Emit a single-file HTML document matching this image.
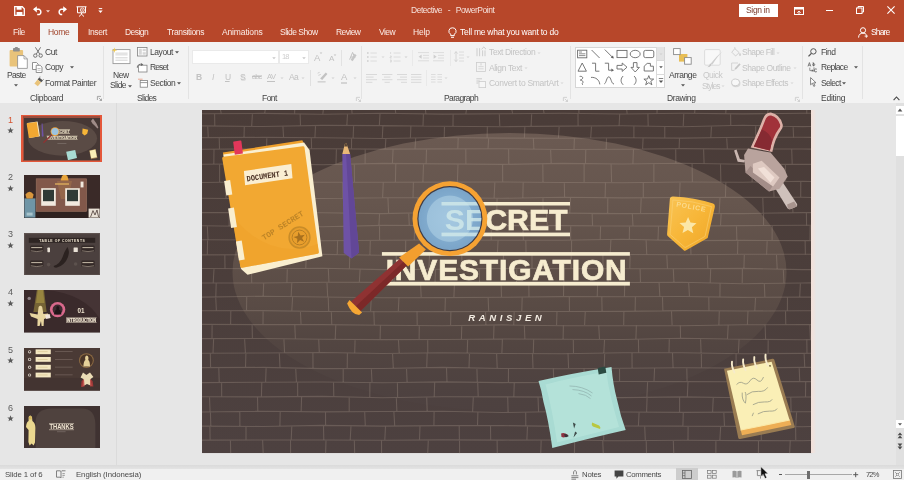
<!DOCTYPE html>
<html><head><meta charset="utf-8"><title>Detective - PowerPoint</title>
<style>
html,body{margin:0;padding:0;}
body{width:904px;height:480px;overflow:hidden;position:relative;background:#E6E6E6;font-family:"Liberation Sans",sans-serif;}
.r{position:absolute;display:block;}
.t{position:absolute;display:block;white-space:nowrap;line-height:10px;height:10px;will-change:transform;filter:blur(0.35px);}
svg.r{filter:blur(0.4px);}
svg{overflow:visible;}
svg text{font-family:"Liberation Sans",sans-serif;}
</style></head><body>
<div class="r" style="left:0px;top:0px;width:904px;height:41.5px;background:#B7472A;"></div>
<div class="r" style="left:0px;top:41.5px;width:904px;height:61.2px;background:#F3F3F3;"></div>
<div class="r" style="left:40.4px;top:22.6px;width:38px;height:19.5px;background:#F3F3F3;"></div>
<svg class="r" style="left:13.5px;top:6px;" width="11" height="10" viewBox="0 0 11 10"><path d="M0.7,0.7 H8.3 L10.3,2.7 V9.3 H0.7 Z" fill="none" stroke="#fff" stroke-width="1.3"/><rect x="2.6" y="0.7" width="5" height="3" fill="#fff"/><rect x="2.6" y="6" width="5.8" height="3.3" fill="#fff"/></svg>
<svg class="r" style="left:33px;top:6px;" width="11" height="9" viewBox="0 0 11 9"><path d="M1.2,3.3 H6.2 A3.2,3 0 0 1 6.2,8.6 H4.2" fill="none" stroke="#fff" stroke-width="1.5"/><path d="M0,3.3 L3.8,0.2 V6.4 Z" fill="#fff"/></svg>
<svg class="r" style="left:44.6px;top:7.6px" width="6" height="6" viewBox="-3 -3 6 6"><path d="M-1.9800000000000002,-0.7200000000000001 L1.9800000000000002,-0.7200000000000001 L0,1.4400000000000002 Z" fill="#F3D9D0"/></svg>
<svg class="r" style="left:56px;top:6px;" width="11" height="9" viewBox="0 0 11 9"><path d="M9.8,3.3 H4.8 A3.2,3 0 0 0 4.8,8.6 H6.2" fill="none" stroke="#fff" stroke-width="1.5"/><path d="M11,3.3 L7.2,0.2 V6.4 Z" fill="#fff"/></svg>
<svg class="r" style="left:75.5px;top:5.5px;" width="11" height="11" viewBox="0 0 11 11"><path d="M0.5,0.8 H10.5 M1.5,0.8 V6.8 H9.5 V0.8 M5.5,6.8 V8.4 M3,10.5 L5.5,8.2 L8,10.5" fill="none" stroke="#fff" stroke-width="1"/><circle cx="6.3" cy="4" r="2" fill="none" stroke="#fff" stroke-width="0.8"/><path d="M5.7,3 L7.4,4 L5.7,5 Z" fill="#fff"/></svg>
<svg class="r" style="left:97.5px;top:7.5px;" width="5" height="6" viewBox="0 0 5 6"><path d="M0.8,0.6 H4.2" stroke="#fff" stroke-width="1"/><path d="M0.3,2.6 H4.7 L2.5,5 Z" fill="#fff"/></svg>
<span class="t" style="left:411.0px;top:5.3px;font-size:8.5px;letter-spacing:-0.49px;color:#F6E2DC;word-spacing:3.8px;">Detective - PowerPoint</span>
<div class="r" style="left:738.5px;top:4px;width:39px;height:12.6px;background:#fff;"></div>
<span class="t" style="left:746.2px;top:5.2px;font-size:8.5px;letter-spacing:-0.34px;color:#7A3A2A;">Sign in</span>
<svg class="r" style="left:793.5px;top:6.5px;" width="10" height="8" viewBox="0 0 10 8"><rect x="0.5" y="0.5" width="9" height="7" fill="none" stroke="#fff" stroke-width="1"/><rect x="0.5" y="0.5" width="9" height="2" fill="#fff"/><path d="M3.3,5.8 L5,4 L6.7,5.8 M5,4.2 V7" fill="none" stroke="#fff" stroke-width="0.9"/></svg>
<div class="r" style="left:825.6px;top:9.6px;width:7.6px;height:1px;background:#fff;"></div>
<svg class="r" style="left:855.5px;top:6px;" width="8" height="8" viewBox="0 0 8 8"><rect x="0.5" y="2" width="5.5" height="5.5" fill="none" stroke="#fff" stroke-width="1"/><path d="M2,2 V0.5 H7.5 V6 H6" fill="none" stroke="#fff" stroke-width="1"/></svg>
<svg class="r" style="left:887px;top:6.3px;" width="8" height="8" viewBox="0 0 8 8"><path d="M0.4,0.4 L7.6,7.6 M7.6,0.4 L0.4,7.6" stroke="#fff" stroke-width="1.1"/></svg>
<span class="t" style="left:13.0px;top:27.3px;font-size:8.5px;letter-spacing:-0.47px;color:#FBEDE8;">File</span>
<span class="t" style="left:48.2px;top:27.3px;font-size:8.5px;letter-spacing:-0.32px;color:#A0432A;">Home</span>
<span class="t" style="left:88.0px;top:27.3px;font-size:8.5px;letter-spacing:-0.38px;color:#FBEDE8;">Insert</span>
<span class="t" style="left:125.2px;top:27.3px;font-size:8.5px;letter-spacing:-0.56px;color:#FBEDE8;">Design</span>
<span class="t" style="left:166.9px;top:27.3px;font-size:8.5px;letter-spacing:-0.38px;color:#FBEDE8;">Transitions</span>
<span class="t" style="left:221.8px;top:27.3px;font-size:8.5px;letter-spacing:-0.14px;color:#FBEDE8;">Animations</span>
<span class="t" style="left:280.3px;top:27.3px;font-size:8.5px;letter-spacing:-0.50px;color:#FBEDE8;">Slide Show</span>
<span class="t" style="left:336.0px;top:27.3px;font-size:8.5px;letter-spacing:-0.59px;color:#FBEDE8;">Review</span>
<span class="t" style="left:378.6px;top:27.3px;font-size:8.5px;letter-spacing:-0.52px;color:#FBEDE8;">View</span>
<span class="t" style="left:413.0px;top:27.3px;font-size:8.5px;letter-spacing:-0.15px;color:#FBEDE8;">Help</span>
<svg class="r" style="left:447.5px;top:26.5px;" width="9" height="12" viewBox="0 0 9 12"><path d="M4.5,0.8 A3.4,3.4 0 0 1 6.3,7.2 V8.6 H2.7 V7.2 A3.4,3.4 0 0 1 4.5,0.8 Z" fill="none" stroke="#fff" stroke-width="1"/><path d="M3,10.3 H6" stroke="#fff" stroke-width="1"/></svg>
<span class="t" style="left:460.4px;top:27.3px;font-size:8.5px;letter-spacing:-0.24px;color:#fff;">Tell me what you want to do</span>
<svg class="r" style="left:857.5px;top:27px;" width="11" height="11" viewBox="0 0 11 11"><circle cx="5" cy="3.3" r="2.6" fill="none" stroke="#fff" stroke-width="1"/><path d="M0.6,10.6 C0.6,7.4 2.4,6.2 5,6.2 C6.4,6.2 7.4,6.6 8,7.2" fill="none" stroke="#fff" stroke-width="1"/><path d="M8.3,7.4 V10.8 M6.6,9.1 H10" stroke="#fff" stroke-width="0.9"/></svg>
<span class="t" style="left:871.2px;top:27.3px;font-size:8.5px;letter-spacing:-0.84px;color:#fff;">Share</span>
<div class="r" style="left:103.3px;top:46px;width:1px;height:53px;background:#E3E3E3;"></div>
<div class="r" style="left:187.7px;top:46px;width:1px;height:53px;background:#E3E3E3;"></div>
<div class="r" style="left:361.3px;top:46px;width:1px;height:53px;background:#E3E3E3;"></div>
<div class="r" style="left:570.4px;top:46px;width:1px;height:53px;background:#E3E3E3;"></div>
<div class="r" style="left:801.8px;top:46px;width:1px;height:53px;background:#E3E3E3;"></div>
<div class="r" style="left:862.4px;top:46px;width:1px;height:53px;background:#E3E3E3;"></div>
<svg class="r" style="left:8.5px;top:46.5px;" width="19" height="22" viewBox="0 0 19 22"><rect x="0.6" y="3" width="13.5" height="16.5" rx="1" fill="#E9C37A"/><rect x="4" y="1" width="6.8" height="3.6" rx="0.8" fill="#8E8E8E"/><rect x="5.8" y="0" width="3.2" height="2" rx="1" fill="#8E8E8E"/><path d="M8.6,8.6 H15 L18.3,11.9 V21.4 H8.6 Z" fill="#fff" stroke="#8A8A8A" stroke-width="0.8"/><path d="M15,8.6 V11.9 H18.3" fill="none" stroke="#8A8A8A" stroke-width="0.7"/></svg>
<span class="t" style="left:6.9px;top:70.2px;font-size:8.5px;letter-spacing:-0.65px;color:#444;">Paste</span>
<svg class="r" style="left:12.9px;top:82.2px" width="6" height="6" viewBox="-3 -3 6 6"><path d="M-1.9800000000000002,-0.7200000000000001 L1.9800000000000002,-0.7200000000000001 L0,1.4400000000000002 Z" fill="#555"/></svg>
<svg class="r" style="left:32.5px;top:46.5px;" width="10" height="11" viewBox="0 0 10 11"><path d="M2.4,0.3 L6.8,7.2 M7.6,0.3 L3.2,7.2" stroke="#666" stroke-width="0.9" fill="none"/><circle cx="2.3" cy="8.6" r="1.7" fill="none" stroke="#666" stroke-width="0.9"/><circle cx="7.7" cy="8.6" r="1.7" fill="none" stroke="#666" stroke-width="0.9"/></svg>
<span class="t" style="left:45.1px;top:47.3px;font-size:8.5px;letter-spacing:-0.44px;color:#444;">Cut</span>
<svg class="r" style="left:32px;top:61.5px;" width="11" height="11" viewBox="0 0 11 11"><path d="M0.5,0.5 H4.5 L6.2,2.2 V7.5 H0.5 Z" fill="#fff" stroke="#777" stroke-width="0.8"/><path d="M4.2,3.3 H8.2 L10,5.1 V10.5 H4.2 Z" fill="#fff" stroke="#777" stroke-width="0.8"/><path d="M5.5,6.5 H8.6 M5.5,8.3 H8.6" stroke="#999" stroke-width="0.6"/></svg>
<span class="t" style="left:45.1px;top:62.4px;font-size:8.5px;letter-spacing:-0.44px;color:#444;">Copy</span>
<svg class="r" style="left:68.6px;top:64.2px" width="6" height="6" viewBox="-3 -3 6 6"><path d="M-1.9800000000000002,-0.7200000000000001 L1.9800000000000002,-0.7200000000000001 L0,1.4400000000000002 Z" fill="#555"/></svg>
<svg class="r" style="left:33.5px;top:77px;" width="10" height="10" viewBox="0 0 10 10"><path d="M5.2,0.6 L9,3.6 L7.3,5.3 L3.6,2.4 Z" fill="#555"/><path d="M3.6,2.6 L7,5.4 L3.8,9.2 L0.4,6.4 Z" fill="#E9C37A"/><path d="M5.4,0.2 l1,-0.2 M8.8,3 l0.8,-0.6" stroke="#555" stroke-width="0.8"/></svg>
<span class="t" style="left:45.1px;top:77.8px;font-size:8.5px;letter-spacing:-0.36px;color:#444;">Format Painter</span>
<span class="t" style="left:30.0px;top:93.2px;font-size:8.5px;letter-spacing:-0.35px;color:#444;">Clipboard</span>
<svg class="r" style="left:96.8px;top:96.3px;" width="5" height="5" viewBox="0 0 5 5"><path d="M0.4,4 V0.4 H4" fill="none" stroke="#888" stroke-width="0.7"/><path d="M1.8,1.8 L4.4,4.4 M4.5,2.6 V4.5 H2.6" fill="none" stroke="#888" stroke-width="0.7"/></svg>
<svg class="r" style="left:111.5px;top:47.5px;" width="19" height="17" viewBox="0 0 19 17"><rect x="1" y="1.6" width="17" height="14" fill="#fff" stroke="#9A9A9A" stroke-width="0.9"/><rect x="3.4" y="4.4" width="12.2" height="3.2" fill="#E4E4E4"/><path d="M3.4,9.8 H15.6 M3.4,12.2 H15.6" stroke="#C8C8C8" stroke-width="0.8"/><path d="M2.4,-0.6 L3,1.6 L5.2,2.2 L3,2.8 L2.4,5 L1.8,2.8 L-0.4,2.2 L1.8,1.6 Z" fill="#EFC84E"/></svg>
<span class="t" style="left:113.2px;top:70.2px;font-size:8.5px;letter-spacing:-0.40px;color:#444;">New</span>
<span class="t" style="left:110.1px;top:80.3px;font-size:8.5px;letter-spacing:-0.60px;color:#444;">Slide</span>
<svg class="r" style="left:127px;top:82.6px" width="6" height="6" viewBox="-3 -3 6 6"><path d="M-1.9800000000000002,-0.7200000000000001 L1.9800000000000002,-0.7200000000000001 L0,1.4400000000000002 Z" fill="#555"/></svg>
<svg class="r" style="left:137.3px;top:47.3px;" width="10.5" height="9.5" viewBox="0 0 10.5 9.5"><rect x="0.5" y="0.5" width="9.5" height="8.5" fill="#fff" stroke="#808080" stroke-width="0.8"/><rect x="1.8" y="1.8" width="3" height="5.9" fill="#D6D6D6"/><rect x="5.6" y="1.8" width="3.2" height="2.4" fill="#D6D6D6"/><rect x="5.6" y="5.2" width="3.2" height="2.5" fill="#D6D6D6"/></svg>
<span class="t" style="left:149.9px;top:47.3px;font-size:8.5px;letter-spacing:-0.42px;color:#444;">Layout</span>
<svg class="r" style="left:174.2px;top:49.4px" width="6" height="6" viewBox="-3 -3 6 6"><path d="M-1.9800000000000002,-0.7200000000000001 L1.9800000000000002,-0.7200000000000001 L0,1.4400000000000002 Z" fill="#555"/></svg>
<svg class="r" style="left:137.3px;top:62.8px;" width="10.5" height="9.5" viewBox="0 0 10.5 9.5"><rect x="1.6" y="2.2" width="8.4" height="6.8" fill="#fff" stroke="#808080" stroke-width="0.8"/><path d="M0.3,4.8 A3.2,3.2 0 0 1 5,1.6" fill="none" stroke="#666" stroke-width="0.9"/><path d="M4.2,0 L6.4,1.8 L3.8,3 Z" fill="#666"/></svg>
<span class="t" style="left:149.9px;top:62.4px;font-size:8.5px;letter-spacing:-0.90px;color:#444;">Reset</span>
<svg class="r" style="left:137.8px;top:78px;" width="10" height="10" viewBox="0 0 10 10"><path d="M0,1.2 H4.6" stroke="#E8A08A" stroke-width="0.9"/><rect x="2.2" y="2.4" width="7.2" height="6.8" fill="#fff" stroke="#808080" stroke-width="0.8"/><path d="M2.2,4.6 H9.4" stroke="#808080" stroke-width="0.8"/></svg>
<span class="t" style="left:149.9px;top:77.8px;font-size:8.5px;letter-spacing:-0.42px;color:#444;">Section</span>
<svg class="r" style="left:176.2px;top:79.9px" width="6" height="6" viewBox="-3 -3 6 6"><path d="M-1.9800000000000002,-0.7200000000000001 L1.9800000000000002,-0.7200000000000001 L0,1.4400000000000002 Z" fill="#555"/></svg>
<span class="t" style="left:136.5px;top:93.2px;font-size:8.5px;letter-spacing:-0.66px;color:#444;">Slides</span>
<div class="r" style="left:191.6px;top:50.4px;width:87px;height:13.6px;background:#fff;box-sizing:border-box;border:1px solid #EAEAEA;"></div>
<svg class="r" style="left:271.2px;top:54.6px" width="6" height="6" viewBox="-3 -3 6 6"><path d="M-1.7600000000000002,-0.6400000000000001 L1.7600000000000002,-0.6400000000000001 L0,1.2800000000000002 Z" fill="#C8C8C8"/></svg>
<div class="r" style="left:279.4px;top:50.4px;width:29.2px;height:13.6px;background:#fff;box-sizing:border-box;border:1px solid #EAEAEA;"></div>
<span class="t" style="left:282.0px;top:52.4px;font-size:7.5px;letter-spacing:-0.97px;color:#CDCDCD;">18</span>
<svg class="r" style="left:300.8px;top:54.6px" width="6" height="6" viewBox="-3 -3 6 6"><path d="M-1.7600000000000002,-0.6400000000000001 L1.7600000000000002,-0.6400000000000001 L0,1.2800000000000002 Z" fill="#C8C8C8"/></svg>
<span class="t" style="left:313.8px;top:52.9px;font-size:9.5px;letter-spacing:-0.54px;color:#C2C2C2;">A</span>
<svg class="r" style="left:318.2px;top:50.2px" width="6" height="6" viewBox="-3 -3 6 6"><path d="M-1.32,-0.48 L1.32,-0.48 L0,0.96 Z" fill="#C2C2C2"/></svg>
<span class="t" style="left:328.8px;top:53.6px;font-size:8px;letter-spacing:-0.54px;color:#C2C2C2;">A</span>
<svg class="r" style="left:331.8px;top:51.8px" width="6" height="6" viewBox="-3 -3 6 6"><path d="M-1.32,-0.48 L1.32,-0.48 L0,0.96 Z" fill="#C2C2C2"/></svg>
<div class="r" style="left:341px;top:50px;width:0.8px;height:16px;background:#E2E2E2;"></div>
<svg class="r" style="left:347.5px;top:51.5px;" width="10" height="12" viewBox="0 0 10 12"><path d="M4.6,0.4 L1.6,7.6 M4.6,0.4 L7,6 M2.8,5 H6.2" stroke="#C2C2C2" stroke-width="1" fill="none"/><path d="M8.6,3.2 L4.6,9.2 L2.6,7.8 L6.6,1.8 Z" fill="#C6C6C6"/></svg>
<span class="t" style="left:196.2px;top:72.4px;font-size:8.5px;letter-spacing:-1.74px;color:#C2C2C2;font-weight:bold;">B</span>
<span class="t" style="left:211.8px;top:72.4px;font-size:8.5px;letter-spacing:0.24px;color:#C2C2C2;font-style:italic;">I</span>
<span class="t" style="left:225.0px;top:72.2px;font-size:8.5px;letter-spacing:-1.54px;color:#C2C2C2;text-decoration:underline;">U</span>
<span class="t" style="left:240.2px;top:72.4px;font-size:8.5px;letter-spacing:-1.07px;color:#C2C2C2;text-shadow:0.6px 0.6px 0 #D8D8D8;">S</span>
<span class="t" style="left:251.8px;top:72.4px;font-size:7.5px;letter-spacing:-0.86px;color:#C2C2C2;text-decoration:line-through;">abc</span>
<span class="t" style="left:266.8px;top:71.6px;font-size:7.5px;letter-spacing:-0.42px;color:#C2C2C2;">AV</span>
<div class="r" style="left:267px;top:81px;width:8px;height:0.7px;background:#C2C2C2;"></div>
<svg class="r" style="left:278.6px;top:74.6px" width="6" height="6" viewBox="-3 -3 6 6"><path d="M-1.54,-0.5599999999999999 L1.54,-0.5599999999999999 L0,1.1199999999999999 Z" fill="#CFCFCF"/></svg>
<span class="t" style="left:288.8px;top:72.4px;font-size:8.5px;letter-spacing:-0.60px;color:#C2C2C2;">Aa</span>
<svg class="r" style="left:299.8px;top:74.6px" width="6" height="6" viewBox="-3 -3 6 6"><path d="M-1.54,-0.5599999999999999 L1.54,-0.5599999999999999 L0,1.1199999999999999 Z" fill="#CFCFCF"/></svg>
<div class="r" style="left:310.3px;top:70px;width:0.8px;height:16px;background:#E0E0E0;"></div>
<svg class="r" style="left:316.5px;top:71.5px;" width="11" height="11" viewBox="0 0 11 11"><path d="M8.8,0.6 L10.4,2 L5.2,8 L3.2,6.6 Z" fill="#C2C2C2"/><path d="M0.6,1.2 l2,-0.8 M1.4,3.4 l2.4,-1" stroke="#C8C8C8" stroke-width="0.8"/><path d="M0.6,9.8 H8.6" stroke="#D4D4D4" stroke-width="1.6"/></svg>
<svg class="r" style="left:329.6px;top:74.6px" width="6" height="6" viewBox="-3 -3 6 6"><path d="M-1.54,-0.5599999999999999 L1.54,-0.5599999999999999 L0,1.1199999999999999 Z" fill="#CFCFCF"/></svg>
<span class="t" style="left:340.8px;top:71.8px;font-size:9.5px;letter-spacing:0.06px;color:#C2C2C2;">A</span>
<div class="r" style="left:340.8px;top:82.2px;width:6.6px;height:1.4px;background:#D4D4D4;"></div>
<svg class="r" style="left:351.6px;top:74.6px" width="6" height="6" viewBox="-3 -3 6 6"><path d="M-1.54,-0.5599999999999999 L1.54,-0.5599999999999999 L0,1.1199999999999999 Z" fill="#CFCFCF"/></svg>
<span class="t" style="left:262.1px;top:93.2px;font-size:8.5px;letter-spacing:-0.53px;color:#444;">Font</span>
<svg class="r" style="left:355.6px;top:96.8px;" width="5" height="5" viewBox="0 0 5 5"><path d="M0.4,4 V0.4 H4" fill="none" stroke="#C4C4C4" stroke-width="0.7"/><path d="M1.8,1.8 L4.4,4.4 M4.5,2.6 V4.5 H2.6" fill="none" stroke="#C4C4C4" stroke-width="0.7"/></svg>
<svg class="r" style="left:367.3px;top:51.5px;" width="11" height="11" viewBox="0 0 11 11"><path d="M0,1 h1.6 M0,5 h1.6 M0,9 h1.6" stroke="#CECECE" stroke-width="1.4"/><path d="M3.4,1 h6.4 M3.4,5 h6.4 M3.4,9 h6.4" stroke="#DADADA" stroke-width="0.9"/></svg>
<svg class="r" style="left:380.2px;top:54.4px" width="6" height="6" viewBox="-3 -3 6 6"><path d="M-1.54,-0.5599999999999999 L1.54,-0.5599999999999999 L0,1.1199999999999999 Z" fill="#D6D6D6"/></svg>
<svg class="r" style="left:390px;top:51.5px;" width="11" height="11" viewBox="0 0 11 11"><path d="M0.6,0 v2 M0,4 h1.4 v1 h-1.4 v1 h1.6 M0,8 h1.4 v2 h-1.4 M0,9 h1.4" stroke="#CECECE" stroke-width="0.6" fill="none"/><path d="M3.6,1 h7 M3.6,5 h7 M3.6,9 h7" stroke="#DADADA" stroke-width="0.9"/></svg>
<svg class="r" style="left:403px;top:54.4px" width="6" height="6" viewBox="-3 -3 6 6"><path d="M-1.54,-0.5599999999999999 L1.54,-0.5599999999999999 L0,1.1199999999999999 Z" fill="#CFCFCF"/></svg>
<div class="r" style="left:412.4px;top:50px;width:0.8px;height:16px;background:#E9E9E9;"></div>
<svg class="r" style="left:417.5px;top:51.5px;" width="11" height="11" viewBox="0 0 11 11"><path d="M0,0.6 h11 M5,3.4 h6 M5,6 h6 M0,8.8 h11" stroke="#DADADA" stroke-width="0.9"/><path d="M3.6,2.6 L0.6,4.7 L3.6,6.8 Z" fill="#CECECE"/></svg>
<svg class="r" style="left:432.8px;top:51.5px;" width="11" height="11" viewBox="0 0 11 11"><path d="M0,0.6 h11 M5,3.4 h6 M5,6 h6 M0,8.8 h11" stroke="#DADADA" stroke-width="0.9"/><path d="M0.6,2.6 L3.6,4.7 L0.6,6.8 Z" fill="#CECECE"/></svg>
<div class="r" style="left:449.6px;top:50px;width:0.8px;height:16px;background:#E9E9E9;"></div>
<svg class="r" style="left:454px;top:51px;" width="10" height="12" viewBox="0 0 10 12"><path d="M5,1 h5 M5,4 h5 M5,7 h5 M5,10 h5" stroke="#DADADA" stroke-width="0.9"/><path d="M2,0.6 v10 M0.4,2.6 L2,0.6 L3.6,2.6 M0.4,8.6 L2,10.6 L3.6,8.6" stroke="#CECECE" stroke-width="0.8" fill="none"/></svg>
<svg class="r" style="left:465.4px;top:54.4px" width="6" height="6" viewBox="-3 -3 6 6"><path d="M-1.54,-0.5599999999999999 L1.54,-0.5599999999999999 L0,1.1199999999999999 Z" fill="#D6D6D6"/></svg>
<svg class="r" style="left:366.2px;top:74.2px;" width="12" height="12" viewBox="0 0 12 12"><path d="M0,0.5 h11 M0,3.1 h7.6 M0,5.7 h11 M0,8.3 h6.4 " stroke="#D6D6D6" stroke-width="0.9" fill="none"/></svg>
<svg class="r" style="left:381.8px;top:74.2px;" width="12" height="12" viewBox="0 0 12 12"><path d="M0,0.5 h10.4 M2,3.1 h6.4 M0,5.7 h10.4 M2.6,8.3 h5.2 " stroke="#D6D6D6" stroke-width="0.9" fill="none"/></svg>
<svg class="r" style="left:396.6px;top:74.2px;" width="12" height="12" viewBox="0 0 12 12"><path d="M0,0.5 h10 M3,3.1 h7 M0,5.7 h10 M4,8.3 h6 " stroke="#D6D6D6" stroke-width="0.9" fill="none"/></svg>
<svg class="r" style="left:410.7px;top:74.2px;" width="12" height="12" viewBox="0 0 12 12"><path d="M0,0.5 h10.4 M0,3.1 h10.4 M0,5.7 h10.4 M0,8.3 h10.4 " stroke="#D6D6D6" stroke-width="0.9" fill="none"/></svg>
<div class="r" style="left:426.2px;top:70px;width:0.8px;height:16px;background:#E9E9E9;"></div>
<svg class="r" style="left:431.3px;top:74px;" width="11" height="9" viewBox="0 0 11 9"><path d="M0,0.5 h4.6 M0,3 h4.6 M0,5.5 h4.6 M0,8 h4.6 M6.4,0.5 h4.6 M6.4,3 h4.6 M6.4,5.5 h4.6 M6.4,8 h4.6" stroke="#DADADA" stroke-width="0.9"/></svg>
<svg class="r" style="left:443.4px;top:74.6px" width="6" height="6" viewBox="-3 -3 6 6"><path d="M-1.54,-0.5599999999999999 L1.54,-0.5599999999999999 L0,1.1199999999999999 Z" fill="#D6D6D6"/></svg>
<span class="t" style="left:444.0px;top:93.2px;font-size:8.5px;letter-spacing:-0.63px;color:#444;">Paragraph</span>
<svg class="r" style="left:476px;top:47px;" width="10" height="10" viewBox="0 0 10 10"><path d="M1,1.2 v8 M3.6,1.2 v8 M6.6,3.4 v5.8 M9,3.4 v5.8" stroke="#CACACA" stroke-width="0.9"/><path d="M5.6,2.2 L7.8,0 L10,2.2" fill="none" stroke="#BEBEBE" stroke-width="0.8"/></svg>
<span class="t" style="left:488.9px;top:47.4px;font-size:8.5px;letter-spacing:-0.37px;color:#C3C3C3;">Text Direction</span>
<svg class="r" style="left:536.2px;top:49.6px" width="6" height="6" viewBox="-3 -3 6 6"><path d="M-1.54,-0.5599999999999999 L1.54,-0.5599999999999999 L0,1.1199999999999999 Z" fill="#D6D6D6"/></svg>
<svg class="r" style="left:476px;top:62.4px;" width="10" height="10" viewBox="0 0 10 10"><rect x="0.5" y="0.5" width="9" height="9" fill="none" stroke="#CDCDCD" stroke-width="0.8"/><path d="M2.4,6.8 h5.2 M2.4,4.6 h5.2" stroke="#D2D2D2" stroke-width="0.8"/><path d="M5,1.2 v2.2" stroke="#C6C6C6" stroke-width="0.8"/></svg>
<span class="t" style="left:488.9px;top:62.5px;font-size:8.5px;letter-spacing:-0.36px;color:#C3C3C3;">Align Text</span>
<svg class="r" style="left:523.2px;top:64.6px" width="6" height="6" viewBox="-3 -3 6 6"><path d="M-1.54,-0.5599999999999999 L1.54,-0.5599999999999999 L0,1.1199999999999999 Z" fill="#D6D6D6"/></svg>
<svg class="r" style="left:476px;top:77.6px;" width="10" height="10" viewBox="0 0 10 10"><rect x="3" y="3.6" width="6.6" height="6" fill="#F6F6F6" stroke="#CDCDCD" stroke-width="0.8"/><path d="M0.4,0.8 h5.6 M0.4,3 h3.4 M0.4,5 h2" stroke="#C6C6C6" stroke-width="0.9"/></svg>
<span class="t" style="left:488.9px;top:77.7px;font-size:8.5px;letter-spacing:-0.29px;color:#C3C3C3;">Convert to SmartArt</span>
<svg class="r" style="left:559.4px;top:79.8px" width="6" height="6" viewBox="-3 -3 6 6"><path d="M-1.54,-0.5599999999999999 L1.54,-0.5599999999999999 L0,1.1199999999999999 Z" fill="#D6D6D6"/></svg>
<svg class="r" style="left:563.4px;top:96.8px;" width="5" height="5" viewBox="0 0 5 5"><path d="M0.4,4 V0.4 H4" fill="none" stroke="#C4C4C4" stroke-width="0.7"/><path d="M1.8,1.8 L4.4,4.4 M4.5,2.6 V4.5 H2.6" fill="none" stroke="#C4C4C4" stroke-width="0.7"/></svg>
<div class="r" style="left:574.6px;top:46.6px;width:90.4px;height:41.2px;background:#fff;box-sizing:border-box;border:1px solid #D6D6D6;"></div>
<div class="r" style="left:656.8px;top:47.4px;width:7.6px;height:12.6px;background:#E3E3E3;"></div>
<div class="r" style="left:656.4px;top:46.6px;width:0.8px;height:41.2px;background:#DADADA;"></div>
<div class="r" style="left:656.8px;top:60px;width:8px;height:0.8px;background:#DADADA;"></div>
<div class="r" style="left:656.8px;top:73.8px;width:8px;height:0.8px;background:#DADADA;"></div>
<svg class="r" style="left:657.8px;top:51px" width="6" height="6" viewBox="-3 -3 6 6"><path d="M-1.54,-0.5599999999999999 L1.54,-0.5599999999999999 L0,1.1199999999999999 Z" fill="#CFCFCF"/></svg>
<svg class="r" style="left:657.8px;top:64px" width="6" height="6" viewBox="-3 -3 6 6"><path d="M-1.7600000000000002,-0.6400000000000001 L1.7600000000000002,-0.6400000000000001 L0,1.2800000000000002 Z" fill="#555"/></svg>
<svg class="r" style="left:657.8px;top:76.5px;" width="6" height="8" viewBox="0 0 6 8"><path d="M0.8,1.4 h4.4" stroke="#555" stroke-width="0.8"/><path d="M0.8,3.4 H5.2 L3,6 Z" fill="#555"/></svg>
<svg class="r" style="left:574.6px;top:46.6px;" width="90" height="41" viewBox="0 0 90 41"><g transform="translate(7.2,7.0)"><rect x="-4.6" y="-3.8" width="9.2" height="7.6" stroke="#6A6A6A" stroke-width="0.9" fill="none"/><path d="M-3.2,-2 h3 M-3.2,-0.2 h6.4 M-3.2,1.6 h6.4" stroke="#5E5E5E" stroke-width="0.7"/></g><g transform="translate(20.6,7.0)"><path d="M-4,-4 L4,4" stroke="#6A6A6A" stroke-width="0.9" fill="none"/></g><g transform="translate(34.2,7.0)"><path d="M-4.4,-4.4 L3.4,3.4" stroke="#6A6A6A" stroke-width="0.9" fill="none"/><path d="M4.6,4.6 L1.6,3.8 L3.8,1.6 Z" fill="#5E5E5E"/></g><g transform="translate(47.0,7.0)"><rect x="-5" y="-3.6" width="10" height="7.2" stroke="#6A6A6A" stroke-width="0.9" fill="none"/></g><g transform="translate(60.2,7.0)"><ellipse cx="0" cy="0" rx="5" ry="3.7" stroke="#6A6A6A" stroke-width="0.9" fill="none"/></g><g transform="translate(73.8,7.0)"><rect x="-5" y="-3.6" width="10" height="7.2" rx="1.6" stroke="#6A6A6A" stroke-width="0.9" fill="none"/></g><g transform="translate(7.2,20.2)"><path d="M0,-4.2 L4.2,4 H-4.2 Z" stroke="#6A6A6A" stroke-width="0.9" fill="none"/></g><g transform="translate(20.6,20.2)"><path d="M-3.6,-4 H0 V4 H3.8" stroke="#6A6A6A" stroke-width="0.9" fill="none"/></g><g transform="translate(34.2,20.2)"><path d="M-4.4,-4 H-0.6 V3 H2.6" stroke="#6A6A6A" stroke-width="0.9" fill="none"/><path d="M4.8,3 L2.2,4.6 V1.4 Z" fill="#5E5E5E"/></g><g transform="translate(47.0,20.2)"><path d="M-5,-1.8 H0.2 V-4.2 L5,0 L0.2,4.2 V1.8 H-5 Z" stroke="#6A6A6A" stroke-width="0.9" fill="none"/></g><g transform="translate(60.2,20.2)"><path d="M-1.8,-4.6 V0.2 H-4.2 L0,4.8 L4.2,0.2 H1.8 V-4.6 Z" stroke="#6A6A6A" stroke-width="0.9" fill="none"/></g><g transform="translate(73.8,20.2)"><path d="M-4.6,3.8 V-1 L-1.6,-3.8 H1.6 V-1 H4.6 V3.8 Z" stroke="#6A6A6A" stroke-width="0.9" fill="none"/></g><g transform="translate(7.2,33.4)"><path d="M-2.6,-4 C1,-4.6 1.6,-1.6 -1.4,-0.6 C-3.4,0 0.6,-0.4 0.8,1.4 C1,3.4 -0.6,2 0.4,4.4" stroke="#6A6A6A" stroke-width="0.9" fill="none"/></g><g transform="translate(20.6,33.4)"><path d="M-4.6,-3 C0.2,-3.4 3.8,-0.4 4.2,4" stroke="#6A6A6A" stroke-width="0.9" fill="none"/></g><g transform="translate(34.2,33.4)"><path d="M-4.8,3.4 C-3,3 -2.6,-3.6 -0.4,-3.6 C1.8,-3.6 2,3.6 4.8,3.6" stroke="#6A6A6A" stroke-width="0.9" fill="none"/></g><g transform="translate(47.0,33.4)"><path d="M1.2,-4.4 C-1.6,-2 -1.6,2 1.2,4.4" stroke="#6A6A6A" stroke-width="0.9" fill="none"/></g><g transform="translate(60.2,33.4)"><path d="M-1.2,-4.4 C1.6,-2 1.6,2 -1.2,4.4" stroke="#6A6A6A" stroke-width="0.9" fill="none"/></g><g transform="translate(73.8,33.4)"><path d="M0,-4.8 L1.3,-1.4 L4.9,-1.3 L2,0.9 L3.1,4.4 L0,2.3 L-3.1,4.4 L-2,0.9 L-4.9,-1.3 L-1.3,-1.4 Z" stroke="#6A6A6A" stroke-width="0.9" fill="none"/></g></svg>
<svg class="r" style="left:673.4px;top:48px;" width="19" height="17" viewBox="0 0 19 17"><rect x="6" y="6" width="8.4" height="7.6" fill="#E8BE55"/><rect x="0.6" y="0.6" width="6.6" height="6" fill="#fff" stroke="#8A8A8A" stroke-width="0.9"/><rect x="11.6" y="9.6" width="6.6" height="6.6" fill="#fff" stroke="#8A8A8A" stroke-width="0.9"/></svg>
<span class="t" style="left:669.1px;top:70.4px;font-size:8.5px;letter-spacing:-0.39px;color:#444;">Arrange</span>
<svg class="r" style="left:680.2px;top:81.8px" width="6" height="6" viewBox="-3 -3 6 6"><path d="M-1.9800000000000002,-0.7200000000000001 L1.9800000000000002,-0.7200000000000001 L0,1.4400000000000002 Z" fill="#555"/></svg>
<span class="t" style="left:667.3px;top:93.2px;font-size:8.5px;letter-spacing:-0.37px;color:#444;">Drawing</span>
<svg class="r" style="left:704px;top:49px;" width="20" height="20" viewBox="0 0 20 20"><rect x="0.6" y="0.6" width="15.6" height="15.6" rx="1.2" fill="#F8F8F8" stroke="#D9D9D9" stroke-width="0.9"/><path d="M18.6,2.4 C15,6 11.4,10.4 8.4,15.6 L6.6,14.8 C10.4,9.6 14.6,5.2 18.6,2.4 Z" fill="#CFCFCF"/><path d="M7.6,15.2 C6.6,17.6 5.2,18.2 3.4,18.2 C5.2,17.2 5.6,16 6,14.6 Z" fill="#C4C4C4"/></svg>
<span class="t" style="left:703.2px;top:70.4px;font-size:8.5px;letter-spacing:-0.49px;color:#C8C8C8;">Quick</span>
<span class="t" style="left:701.7px;top:80.8px;font-size:8.5px;letter-spacing:-0.91px;color:#C8C8C8;">Styles</span>
<svg class="r" style="left:720.2px;top:83px" width="6" height="6" viewBox="-3 -3 6 6"><path d="M-1.54,-0.5599999999999999 L1.54,-0.5599999999999999 L0,1.1199999999999999 Z" fill="#D6D6D6"/></svg>
<svg class="r" style="left:730.6px;top:47px;" width="10" height="10" viewBox="0 0 10 10"><path d="M3.8,1.6 L8.2,5.6 L4.6,9 L0.8,5.2 Z" fill="none" stroke="#C8C8C8" stroke-width="0.8"/><path d="M3.8,1.8 V0 M9,6.4 C9.8,7.6 9.8,8.6 9,8.6 C8.2,8.6 8.2,7.6 9,6.4 Z" stroke="#C8C8C8" stroke-width="0.7" fill="#D2D2D2"/></svg>
<span class="t" style="left:742.0px;top:47.4px;font-size:8.5px;letter-spacing:-0.54px;color:#C3C3C3;">Shape Fill</span>
<svg class="r" style="left:774.6px;top:49.6px" width="6" height="6" viewBox="-3 -3 6 6"><path d="M-1.54,-0.5599999999999999 L1.54,-0.5599999999999999 L0,1.1199999999999999 Z" fill="#D6D6D6"/></svg>
<svg class="r" style="left:730.6px;top:62.4px;" width="10" height="10" viewBox="0 0 10 10"><path d="M0.6,1 H7 M0.6,1 V8.4 H3.4" fill="none" stroke="#CDCDCD" stroke-width="0.8"/><path d="M8.4,1.2 L9.6,2.4 L5.2,7.2 L3.4,7.8 L4,6 Z" fill="#C6C6C6"/></svg>
<span class="t" style="left:742.0px;top:62.5px;font-size:8.5px;letter-spacing:-0.40px;color:#C3C3C3;">Shape Outline</span>
<svg class="r" style="left:791.6px;top:64.6px" width="6" height="6" viewBox="-3 -3 6 6"><path d="M-1.54,-0.5599999999999999 L1.54,-0.5599999999999999 L0,1.1199999999999999 Z" fill="#D6D6D6"/></svg>
<svg class="r" style="left:730.6px;top:77.6px;" width="10" height="10" viewBox="0 0 10 10"><ellipse cx="5" cy="5.4" rx="4.4" ry="3.8" fill="#D8D8D8"/><ellipse cx="4.6" cy="4.4" rx="4" ry="3.4" fill="#F8F8F8" stroke="#C4C4C4" stroke-width="0.8"/></svg>
<span class="t" style="left:742.0px;top:77.7px;font-size:8.5px;letter-spacing:-0.53px;color:#C3C3C3;">Shape Effects</span>
<svg class="r" style="left:789.4px;top:79.8px" width="6" height="6" viewBox="-3 -3 6 6"><path d="M-1.54,-0.5599999999999999 L1.54,-0.5599999999999999 L0,1.1199999999999999 Z" fill="#D6D6D6"/></svg>
<svg class="r" style="left:794.6px;top:96.8px;" width="5" height="5" viewBox="0 0 5 5"><path d="M0.4,4 V0.4 H4" fill="none" stroke="#C4C4C4" stroke-width="0.7"/><path d="M1.8,1.8 L4.4,4.4 M4.5,2.6 V4.5 H2.6" fill="none" stroke="#C4C4C4" stroke-width="0.7"/></svg>
<svg class="r" style="left:808.4px;top:47.6px;" width="9" height="9" viewBox="0 0 9 9"><circle cx="5.4" cy="3.4" r="2.7" fill="none" stroke="#555" stroke-width="1"/><path d="M3.4,5.4 L0.5,8.4" stroke="#555" stroke-width="1.3"/></svg>
<span class="t" style="left:820.6px;top:47.3px;font-size:8.5px;letter-spacing:-0.51px;color:#444;">Find</span>
<svg class="r" style="left:807.4px;top:61.6px;" width="11" height="11" viewBox="0 0 11 11"><path d="M1,4.4 L2.4,0.6 L3.8,4.4 M1.5,3.2 H3.3" fill="none" stroke="#555" stroke-width="0.7"/><path d="M5.6,0.8 h1 v3.4 M5.6,2.6 a1.1,1 0 1 1 0,0.1" fill="none" stroke="#555" stroke-width="0.7"/><path d="M2.8,5.6 V8.6 H5.2" fill="none" stroke="#777" stroke-width="0.8"/><path d="M6.6,8.6 L4.8,7.2 V10 Z" fill="#666"/><path d="M9.8,7.2 a1.5,1.5 0 1 0 0,2.4" fill="none" stroke="#555" stroke-width="0.8"/><path d="M7,5.4 v4.6" stroke="#555" stroke-width="0.7"/></svg>
<span class="t" style="left:820.6px;top:62.4px;font-size:8.5px;letter-spacing:-0.68px;color:#444;">Replace</span>
<svg class="r" style="left:853.2px;top:64.2px" width="6" height="6" viewBox="-3 -3 6 6"><path d="M-1.9800000000000002,-0.7200000000000001 L1.9800000000000002,-0.7200000000000001 L0,1.4400000000000002 Z" fill="#555"/></svg>
<svg class="r" style="left:810px;top:77.4px;" width="7" height="10" viewBox="0 0 7 10"><path d="M0.6,0.6 V7.8 L2.4,6.2 L3.8,9.4 L5,8.8 L3.6,5.8 H6 Z" fill="#fff" stroke="#666" stroke-width="0.8"/></svg>
<span class="t" style="left:820.6px;top:77.8px;font-size:8.5px;letter-spacing:-0.67px;color:#444;">Select</span>
<svg class="r" style="left:841.4px;top:79.9px" width="6" height="6" viewBox="-3 -3 6 6"><path d="M-1.9800000000000002,-0.7200000000000001 L1.9800000000000002,-0.7200000000000001 L0,1.4400000000000002 Z" fill="#555"/></svg>
<span class="t" style="left:821.0px;top:93.2px;font-size:8.5px;letter-spacing:-0.24px;color:#444;">Editing</span>
<svg class="r" style="left:892.6px;top:95.6px;" width="7" height="5" viewBox="0 0 7 5"><path d="M0.6,4.2 L3.5,1 L6.4,4.2" fill="none" stroke="#444" stroke-width="1.1"/></svg>
<svg class="r" style="left:201.5px;top:110px" width="609.8" height="343.2" viewBox="201.5 110 609.8 343.2"><defs><linearGradient id="lit" x1="0" y1="133" x2="0" y2="411" gradientUnits="userSpaceOnUse"><stop offset="0" stop-color="#6B5A52"/><stop offset="0.25" stop-color="#66564E"/><stop offset="0.45" stop-color="#5F5049"/><stop offset="0.62" stop-color="#594B45"/><stop offset="0.76" stop-color="#524541"/><stop offset="0.9" stop-color="#4E4240"/><stop offset="1" stop-color="#4D4140"/></linearGradient><linearGradient id="dk" x1="0" y1="110" x2="0" y2="453" gradientUnits="userSpaceOnUse"><stop offset="0" stop-color="#4A3C38"/><stop offset="0.5" stop-color="#4B3E3B"/><stop offset="1" stop-color="#4D4140"/></linearGradient><clipPath id="sc"><rect x="201.5" y="110" width="609.8" height="343.2"/></clipPath><radialGradient id="glass" cx="0.5" cy="0.5" r="0.5"><stop offset="0" stop-color="#A3C7E0"/><stop offset="0.72" stop-color="#9CC1DB"/><stop offset="0.75" stop-color="#80AACD"/><stop offset="1" stop-color="#7AA4C8"/></radialGradient><linearGradient id="gold" x1="0" y1="0" x2="1" y2="1"><stop offset="0" stop-color="#F9C455"/><stop offset="0.5" stop-color="#F7B638"/><stop offset="1" stop-color="#EFA628"/></linearGradient></defs><g clip-path="url(#sc)"><rect x="201.5" y="110" width="609.8" height="343.2" fill="url(#dk)"/><ellipse cx="509" cy="272" rx="277" ry="139" fill="url(#lit)"/><path d="M201.5,113.8 L262,113.4 L322,114.2 L382,113.3 L442,114.1 L502,113.8 L562,113.3 L622,114.0 L682,113.3 L742,113.9 L802,113.3 L862,113.3 M201.5,125.9 L262,126.5 L322,125.4 L382,125.6 L442,126.2 L502,126.7 L562,126.1 L622,125.8 L682,126.8 L742,125.3 L802,126.6 L862,125.7 M201.5,137.6 L262,137.4 L322,137.7 L382,138.5 L442,137.5 L502,138.1 L562,138.2 L622,137.8 L682,138.1 L742,137.3 L802,137.3 L862,137.5 M201.5,149.2 L262,148.9 L322,148.7 L382,149.1 L442,148.9 L502,148.7 L562,149.5 L622,149.3 L682,148.6 L742,149.1 L802,149.0 L862,149.6 M201.5,164.3 L262,163.7 L322,164.8 L382,163.4 L442,163.9 L502,164.4 L562,163.4 L622,164.0 L682,163.3 L742,164.3 L802,164.4 L862,164.1 M201.5,182.5 L262,181.7 L322,182.3 L382,182.2 L442,182.1 L502,181.9 L562,182.5 L622,182.7 L682,182.0 L742,182.3 L802,181.3 L862,182.3 M201.5,198.2 L262,198.8 L322,198.5 L382,197.7 L442,197.8 L502,198.3 L562,197.2 L622,197.9 L682,197.5 L742,197.4 L802,197.3 L862,198.4 M201.5,212.6 L262,212.6 L322,212.8 L382,213.6 L442,212.3 L502,212.9 L562,213.1 L622,213.6 L682,213.5 L742,213.6 L802,212.6 L862,212.9 M201.5,225.8 L262,226.6 L322,226.7 L382,225.4 L442,225.5 L502,225.6 L562,225.6 L622,226.0 L682,226.1 L742,225.6 L802,225.2 L862,225.9 M201.5,239.8 L262,240.1 L322,240.7 L382,240.3 L442,240.0 L502,240.2 L562,240.3 L622,239.3 L682,240.6 L742,240.4 L802,240.6 L862,240.5 M201.5,254.9 L262,254.8 L322,254.4 L382,255.2 L442,254.3 L502,254.3 L562,254.5 L622,254.5 L682,254.7 L742,254.3 L802,254.2 L862,254.4 M201.5,268.5 L262,268.8 L322,268.2 L382,269.6 L442,269.2 L502,268.4 L562,268.6 L622,268.8 L682,268.8 L742,268.4 L802,269.6 L862,269.8 M201.5,283.0 L262,283.0 L322,282.3 L382,282.4 L442,282.7 L502,282.6 L562,283.5 L622,282.5 L682,282.2 L742,283.7 L802,283.0 L862,282.4 M201.5,297.1 L262,296.2 L322,297.0 L382,297.8 L442,297.6 L502,297.3 L562,296.6 L622,296.8 L682,296.5 L742,297.4 L802,297.1 L862,297.4 M201.5,310.8 L262,310.6 L322,311.5 L382,311.8 L442,311.6 L502,311.5 L562,311.5 L622,311.4 L682,310.6 L742,311.0 L802,310.8 L862,310.2 M201.5,324.4 L262,324.6 L322,324.6 L382,325.3 L442,325.7 L502,324.9 L562,325.7 L622,325.8 L682,325.7 L742,324.8 L802,324.6 L862,324.6 M201.5,338.6 L262,338.5 L322,339.2 L382,339.6 L442,339.5 L502,339.0 L562,339.2 L622,339.5 L682,338.3 L742,339.3 L802,339.7 L862,339.5 M201.5,353.3 L262,353.0 L322,352.5 L382,353.5 L442,352.7 L502,353.5 L562,353.8 L622,352.8 L682,352.8 L742,353.7 L802,353.4 L862,352.5 M201.5,367.6 L262,367.4 L322,368.6 L382,368.5 L442,367.4 L502,368.5 L562,368.8 L622,368.3 L682,367.8 L742,368.1 L802,367.4 L862,367.2 M201.5,382.6 L262,382.2 L322,382.0 L382,382.7 L442,381.9 L502,382.6 L562,382.5 L622,381.5 L682,381.6 L742,381.7 L802,381.6 L862,382.1 M201.5,396.7 L262,396.9 L322,396.4 L382,397.7 L442,396.8 L502,396.9 L562,397.1 L622,397.6 L682,396.9 L742,397.7 L802,397.0 L862,397.1 M201.5,412.0 L262,411.2 L322,411.9 L382,411.5 L442,411.2 L502,412.5 L562,411.5 L622,412.0 L682,412.4 L742,412.1 L802,411.7 L862,412.0 M201.5,426.1 L262,426.5 L322,425.4 L382,426.1 L442,425.6 L502,425.6 L562,426.4 L622,426.0 L682,426.1 L742,426.4 L802,426.7 L862,425.9 M201.5,440.1 L262,440.0 L322,440.0 L382,440.3 L442,439.9 L502,440.1 L562,440.0 L622,440.7 L682,440.3 L742,440.6 L802,440.7 L862,439.6 M220.0,110 L220.8,114 M264.7,110 L264.1,114 M294.2,110 L294.1,114 M322.8,110 L322.3,114 M351.3,110 L351.6,114 M394.8,110 L395.4,114 M425.0,110 L425.4,114 M465.9,110 L465.3,114 M511.4,110 L512.2,114 M543.0,110 L543.7,114 M578.4,110 L578.4,114 M626.2,110 L626.7,114 M656.6,110 L656.5,114 M694.4,110 L694.1,114 M725.5,110 L725.2,114 M767.7,110 L766.9,114 M806.3,110 L806.2,114 M214.1,114 L214.3,126 M251.9,114 L251.2,126 M299.6,114 L300.0,126 M347.0,114 L346.3,126 M379.5,114 L378.8,126 M422.9,114 L422.5,126 M452.6,114 L452.5,126 M498.8,114 L499.3,126 M531.2,114 L530.6,126 M577.5,114 L577.6,126 M619.2,114 L618.6,126 M647.4,114 L647.7,126 M683.3,114 L682.7,126 M730.1,114 L730.3,126 M773.9,114 L773.2,126 M207.2,126 L207.8,138 M243.8,126 L243.5,138 M282.4,126 L283.1,138 M315.0,126 L314.4,138 M353.1,126 L352.6,138 M382.4,126 L381.8,138 M410.4,126 L409.9,138 M444.0,126 L443.7,138 M486.9,126 L486.6,138 M524.4,126 L523.9,138 M558.7,126 L557.9,138 M591.0,126 L590.2,138 M633.4,126 L633.4,138 M664.3,126 L664.3,138 M711.0,126 L710.3,138 M755.2,126 L755.1,138 M792.6,126 L793.1,138 M218.7,138 L219.0,149 M266.3,138 L266.1,149 M310.8,138 L311.1,149 M351.1,138 L351.0,149 M385.4,138 L384.7,149 M415.2,138 L414.5,149 M457.7,138 L457.3,149 M488.2,138 L487.5,149 M532.8,138 L533.4,149 M573.9,138 L573.5,149 M606.0,138 L605.7,149 M642.6,138 L642.1,149 M679.0,138 L678.6,149 M726.2,138 L726.9,149 M764.7,138 L764.3,149 M213.5,149 L213.3,164 M240.6,149 L240.4,164 M277.5,149 L277.5,164 M308.8,149 L308.8,164 M335.9,149 L335.5,164 M364.7,149 L364.6,164 M392.6,149 L391.9,164 M426.0,149 L425.6,164 M465.3,149 L465.4,164 M508.1,149 L508.3,164 M550.1,149 L550.7,164 M585.3,149 L585.0,164 M633.0,149 L632.4,164 M675.2,149 L675.4,164 M703.1,149 L703.6,164 M748.8,149 L749.0,164 M791.2,149 L791.7,164 M219.1,164 L219.1,182 M263.7,164 L264.1,182 M308.0,164 L308.1,182 M353.8,164 L354.0,182 M395.3,164 L394.9,182 M423.0,164 L422.4,182 M457.5,164 L456.9,182 M502.1,164 L502.2,182 M542.3,164 L542.5,182 M583.6,164 L583.6,182 M610.6,164 L611.1,182 M653.4,164 L653.4,182 M691.6,164 L691.9,182 M720.0,164 L720.4,182 M752.3,164 L751.6,182 M784.9,164 L785.2,182 M224.7,182 L225.5,198 M262.1,182 L261.9,198 M299.2,182 L299.5,198 M342.3,182 L342.5,198 M382.8,182 L382.1,198 M412.9,182 L412.5,198 M455.5,182 L455.2,198 M494.4,182 L493.6,198 M522.7,182 L522.3,198 M563.8,182 L564.1,198 M605.0,182 L604.6,198 M642.8,182 L642.8,198 M679.6,182 L679.0,198 M725.4,182 L724.9,198 M772.9,182 L773.6,198 M800.3,182 L800.2,198 M230.7,198 L230.6,213 M263.3,198 L262.8,213 M310.2,198 L309.7,213 M349.4,198 L348.8,213 M387.4,198 L388.1,213 M417.2,198 L417.7,213 M454.9,198 L455.5,213 M496.6,198 L496.2,213 M542.5,198 L542.5,213 M570.0,198 L569.2,213 M607.3,198 L607.2,213 M640.7,198 L640.1,213 M674.9,198 L674.6,213 M719.5,198 L718.7,213 M762.3,198 L762.8,213 M791.8,198 L792.5,213 M228.9,213 L228.6,226 M263.8,213 L263.6,226 M311.7,213 L311.9,226 M346.3,213 L346.2,226 M379.1,213 L378.4,226 M408.2,213 L408.8,226 M441.2,213 L441.9,226 M473.5,213 L473.1,226 M511.2,213 L510.7,226 M546.0,213 L546.8,226 M591.6,213 L592.1,226 M631.8,213 L632.5,226 M678.6,213 L678.7,226 M720.7,213 L720.0,226 M763.1,213 L763.0,226 M805.9,213 L806.1,226 M206.8,226 L207.5,240 M236.4,226 L236.4,240 M270.7,226 L270.3,240 M313.2,226 L313.9,240 M345.6,226 L345.9,240 M379.0,226 L379.1,240 M414.2,226 L413.7,240 M444.6,226 L444.2,240 M490.7,226 L490.7,240 M522.3,226 L522.9,240 M570.2,226 L570.1,240 M600.1,226 L599.7,240 M629.0,226 L628.8,240 M658.0,226 L657.5,240 M690.4,226 L690.5,240 M736.0,226 L736.4,240 M771.7,226 L771.6,240 M809.7,226 L809.5,240 M207.1,240 L206.8,255 M254.4,240 L253.8,255 M292.0,240 L292.2,255 M337.1,240 L336.7,255 M369.8,240 L369.4,255 M405.2,240 L405.1,255 M452.2,240 L452.8,255 M497.6,240 L496.8,255 M525.3,240 L525.6,255 M571.1,240 L571.0,255 M610.4,240 L609.6,255 M645.6,240 L646.3,255 M690.0,240 L690.5,255 M737.4,240 L737.0,255 M766.7,240 L766.1,255 M804.6,240 L804.9,255 M224.3,255 L224.5,269 M267.3,255 L267.3,269 M305.9,255 L305.2,269 M349.3,255 L348.9,269 M395.7,255 L395.9,269 M429.0,255 L428.4,269 M461.3,255 L461.5,269 M503.0,255 L502.4,269 M531.5,255 L531.5,269 M570.7,255 L570.5,269 M602.4,255 L602.6,269 M629.6,255 L629.3,269 M666.3,255 L667.0,269 M706.8,255 L707.4,269 M743.8,255 L743.4,269 M776.0,255 L776.7,269 M213.5,269 L212.7,283 M251.0,269 L251.2,283 M286.8,269 L286.4,283 M327.8,269 L328.5,283 M359.6,269 L358.8,283 M393.7,269 L393.5,283 M435.0,269 L434.5,283 M478.7,269 L479.1,283 M516.3,269 L515.9,283 M563.7,269 L563.4,283 M607.9,269 L607.5,283 M639.6,269 L640.0,283 M672.8,269 L673.5,283 M710.2,269 L709.7,283 M741.9,269 L741.7,283 M782.8,269 L783.5,283 M215.7,283 L215.3,297 M263.2,283 L262.6,297 M291.3,283 L290.6,297 M326.5,283 L327.2,297 M372.1,283 L372.5,297 M420.0,283 L420.7,297 M454.0,283 L453.4,297 M500.6,283 L501.0,297 M528.3,283 L528.5,297 M563.2,283 L563.0,297 M597.2,283 L596.7,297 M624.3,283 L623.9,297 M658.6,283 L659.4,297 M688.2,283 L689.0,297 M719.6,283 L719.4,297 M763.8,283 L764.4,297 M799.9,283 L799.2,297 M215.2,297 L215.9,311 M246.2,297 L246.0,311 M292.1,297 L291.3,311 M327.7,297 L328.2,311 M370.8,297 L370.1,311 M398.5,297 L397.8,311 M444.9,297 L444.5,311 M487.6,297 L488.2,311 M521.7,297 L521.3,311 M568.8,297 L569.0,311 M601.3,297 L601.6,311 M634.9,297 L634.6,311 M662.0,297 L662.4,311 M708.3,297 L708.5,311 M755.1,297 L754.3,311 M787.0,297 L786.9,311 M230.3,311 L230.1,325 M262.6,311 L262.5,325 M299.9,311 L300.6,325 M330.8,311 L331.3,325 M373.3,311 L373.8,325 M416.5,311 L416.7,325 M450.4,311 L450.1,325 M485.0,311 L485.4,325 M513.7,311 L513.2,325 M556.5,311 L556.1,325 M584.8,311 L584.1,325 M623.4,311 L623.2,325 M671.0,311 L671.6,325 M718.8,311 L718.4,325 M747.5,311 L746.9,325 M785.0,311 L785.3,325 M211.6,325 L211.5,339 M251.6,325 L251.9,339 M294.3,325 L294.9,339 M335.3,325 L334.7,339 M379.9,325 L379.6,339 M418.8,325 L418.6,339 M461.3,325 L460.9,339 M493.5,325 L493.1,339 M523.8,325 L524.4,339 M562.9,325 L562.6,339 M598.2,325 L599.0,339 M635.9,325 L635.4,339 M679.8,325 L680.1,339 M727.7,325 L727.0,339 M764.6,325 L765.1,339 M809.3,325 L809.9,339 M213.1,339 L212.5,353 M244.1,339 L244.9,353 M283.4,339 L284.1,353 M318.2,339 L318.8,353 M354.6,339 L354.2,353 M397.9,339 L398.7,353 M427.2,339 L427.3,353 M467.2,339 L466.7,353 M501.9,339 L501.4,353 M533.2,339 L532.8,353 M572.8,339 L573.0,353 M604.1,339 L603.3,353 M637.9,339 L638.2,353 M668.8,339 L668.5,353 M700.1,339 L700.6,353 M738.6,339 L737.9,353 M767.7,339 L767.6,353 M806.3,339 L806.5,353 M209.8,353 L210.1,368 M245.4,353 L245.0,368 M278.8,353 L279.5,368 M312.4,353 L312.5,368 M346.9,353 L346.7,368 M392.0,353 L392.8,368 M426.7,353 L426.2,368 M469.0,353 L468.5,368 M496.1,353 L496.7,368 M532.0,353 L532.5,368 M567.5,353 L568.1,368 M604.2,353 L603.7,368 M631.5,353 L631.6,368 M672.0,353 L672.6,368 M700.8,353 L701.0,368 M735.6,353 L735.6,368 M765.7,353 L765.3,368 M803.6,353 L804.3,368 M218.3,368 L218.7,382 M265.6,368 L265.1,382 M295.2,368 L295.9,382 M342.7,368 L342.7,382 M370.8,368 L371.5,382 M406.0,368 L406.6,382 M446.0,368 L446.5,382 M476.4,368 L476.8,382 M508.0,368 L507.9,382 M552.8,368 L553.3,382 M583.6,368 L583.2,382 M619.0,368 L619.1,382 M654.1,368 L653.5,382 M686.3,368 L686.6,382 M732.1,368 L731.4,382 M770.9,368 L771.3,382 M798.7,368 L799.3,382 M221.1,382 L221.2,397 M261.3,382 L260.9,397 M297.1,382 L297.2,397 M333.0,382 L333.3,397 M369.4,382 L369.3,397 M396.9,382 L397.1,397 M434.2,382 L433.7,397 M477.2,382 L477.7,397 M513.8,382 L513.3,397 M550.8,382 L550.1,397 M580.5,382 L580.4,397 M609.4,382 L609.3,397 M647.1,382 L646.4,397 M687.5,382 L686.8,397 M729.9,382 L730.3,397 M767.6,382 L766.9,397 M805.2,382 L805.0,397 M209.0,397 L209.6,412 M257.0,397 L257.3,412 M301.1,397 L300.6,412 M348.7,397 L348.7,412 M395.8,397 L396.4,412 M426.2,397 L426.7,412 M472.8,397 L472.1,412 M507.2,397 L507.6,412 M537.5,397 L538.1,412 M570.3,397 L570.8,412 M600.3,397 L600.3,412 M646.6,397 L646.1,412 M679.1,397 L679.1,412 M712.8,397 L712.1,412 M743.6,397 L743.1,412 M790.3,397 L790.6,412 M209.9,412 L210.3,426 M239.3,412 L239.4,426 M279.7,412 L279.4,426 M325.0,412 L325.1,426 M364.2,412 L364.8,426 M393.4,412 L394.2,426 M433.6,412 L433.4,426 M477.4,412 L477.0,426 M525.2,412 L525.3,426 M559.7,412 L560.1,426 M596.0,412 L595.5,426 M638.6,412 L637.9,426 M682.8,412 L682.4,426 M723.3,412 L724.0,426 M762.6,412 L762.8,426 M796.1,412 L795.3,426 M209.4,426 L209.6,440 M245.5,426 L245.5,440 M291.3,426 L290.7,440 M323.0,426 L323.3,440 M350.5,426 L349.7,440 M385.0,426 L384.3,440 M419.5,426 L419.0,440 M458.7,426 L458.9,440 M490.0,426 L490.2,440 M527.0,426 L526.4,440 M573.6,426 L573.2,440 M603.8,426 L603.1,440 M644.2,426 L644.8,440 M687.6,426 L687.5,440 M720.2,426 L719.4,440 M760.7,426 L760.8,440 M795.1,426 L795.3,440 M229.9,440 L230.2,454 M262.1,440 L262.7,454 M290.0,440 L290.1,454 M325.5,440 L325.1,454 M353.8,440 L354.2,454 M381.0,440 L381.1,454 M427.8,440 L427.2,454 M459.0,440 L459.1,454 M496.6,440 L496.8,454 M540.7,440 L540.2,454 M574.2,440 L573.9,454 M602.2,440 L602.8,454 M645.7,440 L646.0,454 M672.8,440 L673.3,454 M715.4,440 L715.4,454 M758.0,440 L757.9,454 M789.8,440 L789.1,454 " stroke="#AD9A90" stroke-opacity="0.3" stroke-width="1.1" fill="none"/><path d="M222.3,152.6 L301.8,140.3 L305.5,148 L224.5,161 Z" fill="#EFA02C"/><path d="M222.8,154.6 L303.6,142.6 L309,150 L321.9,256.2 L247,274.8 L240.6,269 Z" fill="#FAEFD0"/><path d="M232.7,142.3 Q232.5,141.5 233.4,141.4 L239.9,140.5 Q240.8,140.4 240.9,141.2 L242.4,153.6 L234.3,154.8 Z" fill="#E3375A"/><path d="M221.7,158.6 Q221.5,157 223,156.8 L302.2,146.2 Q303.8,146 304,147.6 L318.3,252 Q318.5,253.6 317,253.8 L241.6,267.8 Q240,268 239.8,266.4 Z" fill="#F2A832"/><path d="M231.6,216 Q270,262 317,244 L318.3,252 Q318.5,253.6 317,253.8 L241.6,267.8 Q240,268 239.8,266.4 Z" fill="#EEA02A" opacity="0.55"/><path d="M223.6,181 L229.6,180 L231.8,194.4 L225.8,195.4 Z" fill="#F9EED0"/><path d="M227.6,208.6 L233.4,207.6 L236.4,227 L230.6,228 Z" fill="#F9EED0"/><path d="M235.4,241.6 L241.2,240.6 L244.2,259.6 L238.4,260.6 Z" fill="#F9EED0"/><path d="M243.4,171 L290.8,164 L292,178.2 L244.6,185.2 Z" fill="#FAEED2"/><g transform="translate(246.6,181.4) rotate(-8.4)"><text x="0" y="0" style="font-family:'Liberation Mono',monospace;font-size:8.2px;font-weight:bold" fill="#4A3024" textLength="41.6" lengthAdjust="spacingAndGlyphs">DOCUMENT 1</text></g><g transform="translate(263.4,240.6) rotate(-32.5)"><text x="0" y="0" style="font-family:'Liberation Mono',monospace;font-size:8px;font-weight:bold" fill="#BF8527" textLength="48" lengthAdjust="spacingAndGlyphs">TOP SECRET</text></g><circle cx="299" cy="237.5" r="10.4" fill="#E89E2C" stroke="#C98C28" stroke-width="1.5"/><circle cx="299" cy="237.5" r="7.4" fill="none" stroke="#B98024" stroke-width="1"/><path d="M299,231.6 L300.5,235.7 L304.8,235.8 L301.4,238.4 L302.6,242.6 L299,240.1 L295.4,242.6 L296.6,238.4 L293.2,235.8 L297.5,235.7 Z" fill="#A8701E" transform="rotate(-12 299 237.5)"/><path d="M341.8,154 L344.6,143 L346,143.4 L349.6,154 Z" fill="#E9B877"/><path d="M343.8,146.4 L344.6,143 L346,143.4 L347,146.6 Z" fill="#5A4636"/><path d="M341.8,154 L349.6,154 L358.6,252.5 L351,258.6 L343.2,253 Z" fill="#6E52A6"/><path d="M345.6,154 L349.6,154 L358.6,252.5 L351,258.6 Z" fill="#624797"/><rect x="441" y="202" width="128.5" height="3.5" fill="#F6ECCF"/><rect x="441" y="232.6" width="128.5" height="3.7" fill="#F6ECCF"/><rect x="381.4" y="252.1" width="248" height="3.6" fill="#F6ECCF"/><rect x="381.4" y="281.8" width="248" height="3.8" fill="#F6ECCF"/><text x="444.3" y="230.3" font-size="30.3" font-weight="bold" fill="#F6ECCF" stroke="#F6ECCF" stroke-width="0.7" textLength="122.8" lengthAdjust="spacing">SECRET</text><text x="385.2" y="279.6" font-size="30" font-weight="bold" fill="#F6ECCF" stroke="#F6ECCF" stroke-width="0.7" textLength="241" lengthAdjust="spacing">INVESTIGATION</text><text x="467.8" y="320.6" font-size="9.6" font-weight="bold" font-style="italic" fill="#F3ECE2" textLength="73.5" lengthAdjust="spacing">RANISJEN</text><path d="M399.6,258.4 L406.4,265.2 L360,311 L350.6,301.4 Z" fill="#8F3232"/><path d="M403,261.8 L406.4,265.2 L360,311 L355.4,306.2 Z" fill="#7C2828"/><path d="M349,300 L361.6,312.6 L358.6,315 Q351,314.6 346.6,303.4 Z" fill="#F6A734"/><path d="M418.6,243.4 L425.4,249.6 L407.6,266.4 L398.6,257.6 Z" fill="#F39E2E"/><circle cx="449.4" cy="218.7" r="37.4" fill="#F5A233"/><circle cx="449.4" cy="218.7" r="32.6" fill="#3E3A44"/><circle cx="449.4" cy="218.7" r="31.4" fill="url(#glass)"/><clipPath id="gc"><circle cx="449.4" cy="218.7" r="31.4"/></clipPath><g clip-path="url(#gc)" opacity="0.8"><rect x="441" y="202" width="60" height="3.5" fill="#D2EAEA"/><rect x="441" y="232.6" width="60" height="3.7" fill="#D2EAEA"/><text x="444.3" y="230.3" font-size="30.3" font-weight="bold" fill="#D2EAEA" textLength="122.8" lengthAdjust="spacing">SECRET</text></g><path d="M669.4,198.6 Q670,196.4 672.6,196.6 Q694,197.6 712.6,203.6 Q714.8,204.4 714.4,206.8 L707.2,238 L685.2,250.6 Q684,251 683.2,250.2 L667.2,236 Q666.4,235 666.6,233.8 Z" fill="url(#gold)"/><path d="M672.4,200 Q692,200.6 711,206.6 L704.6,236.4 L684.6,247.6 L669.6,234.4 Z" fill="none" stroke="#FAD27A" stroke-width="0.8" opacity="0.7"/><path d="M687.6,217 L690,222.6 L696,223.2 L691.4,227.2 L692.8,233.2 L687.4,230 L682,233 L683.6,227 L679,223 L685.2,222.6 Z" fill="#FBE7A8"/><g transform="translate(675.6,206.4) rotate(10.5)"><text x="0" y="0" font-size="7" font-weight="bold" fill="#FBDA8C" textLength="29.4" lengthAdjust="spacing">POLICE</text></g><path d="M773.6,186.6 L781.4,181 L796.4,203.8 Q797.4,206 795.2,207 L789.6,209.2 Q787.8,209.6 786.8,208 Z" fill="#CFC1BB"/><path d="M786.6,204.6 L793.6,201.6 L796.2,205.4 Q796.6,206.6 795.2,207 L789.6,209.2 Q788,209.4 787.2,208 Z" fill="#A8948E"/><path d="M747.5,148.6 L770,152.4 L783.8,168.8 L787.2,176.4 L779,188.8 L768.6,191.4 L745,172.6 L743.6,155 Z" fill="#B9A39D"/><path d="M745,172.6 L750,166 L772,186 L768.6,191.4 Z" fill="#A38D88"/><path d="M752.4,163.8 L761.2,160.8 L779,177.4 L772.6,186.6 L752.4,172.6 Z" fill="#DEC9C1"/><path d="M757.4,168.6 L763.6,167 L774,177.4 L770,182.8 Z" fill="#F1E0D8"/><path d="M733.6,150.4 L736,149.4 L739.4,159 L744.4,160 L744,162.6 L737.2,161.8 Z" fill="#C9B6B0"/><path d="M750.2,147.4 Q758,131 762.2,119.6 Q764.6,112.4 770.4,112.6 Q779.6,114.6 782.2,124.4 Q782.8,127.4 780.6,130 Q774.6,138 771.8,152 Z" fill="#DDB1A8"/><path d="M753.4,146.6 Q760.6,131 764.6,120.4 Q766.4,115.2 770.6,115.4 Q777.6,117.4 779.6,124.6 Q780,126.8 778.4,128.6 Q772.4,136.6 769.4,150.4 Z" fill="#A1323A"/><path d="M753.4,146.6 Q758.4,136 761.4,129.6 Q769,132.6 771.6,140.4 L769.4,150.4 Z" fill="#862A32"/><path d="M538,381 Q570,373.6 611,367 Q612.6,385 616.6,400 Q620,416 625.2,430 Q590,438 551.8,448 Q548,420 543,402 Q541,390 538,381 Z" fill="#A9DBD3"/><path d="M545,384.4 Q572,377.6 606,371.6 Q608,392 618.6,427 Q588,434.6 556.6,442.6 Q552,410 545,384.4 Z" fill="#B6E3DB" opacity="0.8"/><path d="M597.2,368 L604.8,366.4 L605.8,372.8 L598.2,374.4 Z" fill="#2B4A42"/><path d="M569,386 Q582,386 592,393 M572,389.6 Q584,390 591,396 M578,393.6 Q586,394.6 590,398.6" stroke="#93B5B1" stroke-width="0.8" fill="none"/><path d="M591.6,422.4 L598.6,425.6 Q600.6,427.4 599.6,429 L592.4,426.6 Q590.6,424.6 591.6,422.4 Z" fill="#B9C740"/><path d="M560.6,433.4 Q563.6,432 567.6,435 Q565,438.4 561,437 Z" fill="#8E3140"/><path d="M563.6,434 Q566,433.6 568.4,436 Q566.6,437.6 564.4,437 Z" fill="#3A3238"/><path d="M572.4,422.6 L575.2,424 L573.6,428.6 Z M574.6,431.6 L576.6,433 L573,437.6 Z" fill="#3E4A48"/><g transform="translate(722.6,369) rotate(-11.6)"><path d="M1,0 H50.4 Q51.6,0 52,1.2 L58.6,70 Q58.8,72 57,72 H2.6 Q1,72 1,70.4 Z" fill="#9A7C52"/><path d="M3.4,2.6 H49 L55,64.6 H5 Z" fill="#FAEFB6"/><path d="M5,63.4 H55 L55.6,68.6 H5.2 Z" fill="#EDAE55"/><path d="M5,63.4 H55" stroke="#FBE9A8" stroke-width="1"/><path d="M10.4,5.6 Q8.6,-1 10.200000000000001,-5.4" stroke="#F6EBCB" stroke-width="1.9" fill="none" stroke-linecap="round"/><path d="M21.8,5.6 Q20.0,-1 21.6,-5.4" stroke="#F6EBCB" stroke-width="1.9" fill="none" stroke-linecap="round"/><path d="M33.2,5.6 Q31.400000000000002,-1 33.0,-5.4" stroke="#F6EBCB" stroke-width="1.9" fill="none" stroke-linecap="round"/><path d="M44.6,5.6 Q42.800000000000004,-1 44.4,-5.4" stroke="#F6EBCB" stroke-width="1.9" fill="none" stroke-linecap="round"/><circle cx="46.6" cy="6.4" r="0.9" fill="#6B5A3A"/><path d="M10,18 Q14,15 17,18 T24,17 T31,17.6 T38,16 M14,27 Q12,34 15,38 Q18,30 17,27 M18,30 Q24,27 30,29 T40,27 M22,41 Q28,39 34,40.6 T42,39.6 M19,52 l2,-3 M25,51 Q31,49 37,50.6 T45,49.6" stroke="#9FA08A" stroke-width="0.8" fill="none"/></g></g></svg>
<div class="r" style="left:811.3px;top:110px;width:4.8px;height:343.2px;background:#F1E1DB;background:linear-gradient(90deg,#F3E0D8,#EEE3DF 60%,#E6E5E5);"></div>
<div class="r" style="left:116px;top:102.7px;width:1px;height:363px;background:#DBDBDB;"></div>
<span class="t" style="left:7.6px;top:114.6px;font-size:9px;letter-spacing:-0.20px;color:#D5522E;">1</span>
<svg class="r" style="left:6.6px;top:127.2px" width="7" height="7" viewBox="-3.5 -3.5 7 7"><path d="M0,-3.2 L0.9,-1 L3.2,-0.9 L1.4,0.5 L2,2.8 L0,1.5 L-2,2.8 L-1.4,0.5 L-3.2,-0.9 L-0.9,-1 Z" fill="#5A5A5A"/></svg>
<span class="t" style="left:7.6px;top:172.0px;font-size:9px;letter-spacing:-0.20px;color:#5C5C5C;">2</span>
<svg class="r" style="left:6.6px;top:184.6px" width="7" height="7" viewBox="-3.5 -3.5 7 7"><path d="M0,-3.2 L0.9,-1 L3.2,-0.9 L1.4,0.5 L2,2.8 L0,1.5 L-2,2.8 L-1.4,0.5 L-3.2,-0.9 L-0.9,-1 Z" fill="#5A5A5A"/></svg>
<span class="t" style="left:7.6px;top:229.4px;font-size:9px;letter-spacing:-0.20px;color:#5C5C5C;">3</span>
<svg class="r" style="left:6.6px;top:242.0px" width="7" height="7" viewBox="-3.5 -3.5 7 7"><path d="M0,-3.2 L0.9,-1 L3.2,-0.9 L1.4,0.5 L2,2.8 L0,1.5 L-2,2.8 L-1.4,0.5 L-3.2,-0.9 L-0.9,-1 Z" fill="#5A5A5A"/></svg>
<span class="t" style="left:7.6px;top:287.1px;font-size:9px;letter-spacing:-0.20px;color:#5C5C5C;">4</span>
<svg class="r" style="left:6.6px;top:299.7px" width="7" height="7" viewBox="-3.5 -3.5 7 7"><path d="M0,-3.2 L0.9,-1 L3.2,-0.9 L1.4,0.5 L2,2.8 L0,1.5 L-2,2.8 L-1.4,0.5 L-3.2,-0.9 L-0.9,-1 Z" fill="#5A5A5A"/></svg>
<span class="t" style="left:7.6px;top:344.8px;font-size:9px;letter-spacing:-0.20px;color:#5C5C5C;">5</span>
<svg class="r" style="left:6.6px;top:357.4px" width="7" height="7" viewBox="-3.5 -3.5 7 7"><path d="M0,-3.2 L0.9,-1 L3.2,-0.9 L1.4,0.5 L2,2.8 L0,1.5 L-2,2.8 L-1.4,0.5 L-3.2,-0.9 L-0.9,-1 Z" fill="#5A5A5A"/></svg>
<span class="t" style="left:7.6px;top:402.7px;font-size:9px;letter-spacing:-0.20px;color:#5C5C5C;">6</span>
<svg class="r" style="left:6.6px;top:415.3px" width="7" height="7" viewBox="-3.5 -3.5 7 7"><path d="M0,-3.2 L0.9,-1 L3.2,-0.9 L1.4,0.5 L2,2.8 L0,1.5 L-2,2.8 L-1.4,0.5 L-3.2,-0.9 L-0.9,-1 Z" fill="#5A5A5A"/></svg>
<div class="r" style="left:21.2px;top:114.6px;width:80.8px;height:47.8px;background:#E4573A;"></div>
<div class="r" style="left:23px;top:116.4px;width:77.2px;height:44.2px;background:#9A4E3E;"></div>
<svg class="r" style="left:23.6px;top:117.8px;overflow:hidden" width="76.4" height="42.6" viewBox="0 0 76.4 42.6"><rect width="76.4" height="42.6" fill="#463835"/><ellipse cx="38.5" cy="20.3" rx="34.6" ry="17.4" fill="#5A4B45"/><rect x="0" y="26" width="76.4" height="17" fill="#433836" opacity="0"/><g transform="translate(2.6,5.4) rotate(-9)"><rect x="0.6" y="-0.2" width="10.6" height="15" fill="#F6E8C4"/><rect width="10.2" height="14.8" rx="0.5" fill="#F2A832"/></g><path d="M17.6,5.6 L18.6,5.6 L19.6,18.2 L18.6,18.8 L17.8,18.2 Z" fill="#6E52A6"/><rect x="30" y="11.4" width="16" height="0.5" fill="#F6ECCF"/><rect x="30" y="15.4" width="16" height="0.5" fill="#F6ECCF"/><rect x="22.6" y="17.8" width="31" height="0.5" fill="#F6ECCF"/><rect x="22.6" y="21.4" width="31" height="0.5" fill="#F6ECCF"/><text x="30.4" y="15.1" font-size="3.8" font-weight="bold" fill="#F6ECCF" textLength="15.4" lengthAdjust="spacingAndGlyphs">SECRET</text><text x="23" y="21.1" font-size="3.7" font-weight="bold" fill="#F6ECCF" textLength="30.2" lengthAdjust="spacingAndGlyphs">INVESTIGATION</text><rect x="33.4" y="25.2" width="9" height="0.5" fill="#8D827C"/><path d="M27.8,16.8 L19.4,24.8" stroke="#8F3232" stroke-width="1.3"/><circle cx="31" cy="13.6" r="4.4" fill="#F5A233"/><circle cx="31" cy="13.6" r="3.6" fill="#9CC3E0"/><path d="M58.6,10.6 L64.2,11.8 L63.2,15.8 L60.6,17.4 L58.2,15.4 Z" fill="#F7B638"/><path d="M67,3 L69,0.6 L72.6,5.8 L74.4,9.8 L73.4,10.4 L70.6,7.6 L68.4,5.6 Z" fill="#A08C88"/><path d="M42.2,33.8 L51.2,32 L53,40 L44,42.2 Z" fill="#A9DBD3"/><g transform="translate(65.2,32.4) rotate(-11.6)"><rect width="6.6" height="9" fill="#9A7C52"/><rect x="0.4" y="0.4" width="5.8" height="7.8" fill="#FAEFB6"/></g></svg>
<svg class="r" style="left:23.6px;top:175.2px;overflow:hidden" width="76.4" height="42.6" viewBox="0 0 76.4 42.6"><rect width="76.4" height="42.6" fill="#3A2A28"/><rect x="0" y="36" width="76.4" height="7" fill="#2E2220"/><rect x="12.2" y="3.8" width="50.4" height="32.6" fill="#82584A"/><rect x="12.2" y="3.8" width="50.4" height="32.6" fill="none" stroke="#9A7260" stroke-width="0.6"/><path d="M38,1 L40.6,-1 L43.4,1 L44.6,5.6 L36.6,5.6 Z" fill="#E9A63C"/><path d="M33,6 H48 L44,24 H37 Z" fill="#B8824A" opacity="0.35"/><rect x="31" y="8.4" width="14" height="1.2" fill="#E8B860"/><rect x="17.2" y="13.2" width="14.6" height="17.6" fill="#F1E9DE"/><rect x="19" y="14.8" width="11" height="11.4" fill="#2F3A36"/><rect x="41.2" y="13.2" width="14.6" height="17.6" fill="#F1E9DE"/><rect x="43" y="14.8" width="11" height="11.4" fill="#2F3A36"/><rect x="56.6" y="6.6" width="2.9" height="5.8" fill="#F1E9DE"/><rect x="0.4" y="23.4" width="11" height="19.2" fill="#6F95A6"/><path d="M1.4,19.4 Q5.6,14 9.6,19.4 L8.6,23.4 H2.6 Z" fill="#D9963C"/><rect x="2.6" y="37.6" width="6" height="3" fill="#A8C4CC"/><rect x="64.6" y="33.6" width="11" height="9" fill="#E9E1D6"/><path d="M66.6,42 L69,35.6 L71,40 L73,35 L74.6,42" stroke="#4A3A36" stroke-width="0.8" fill="none"/></svg>
<svg class="r" style="left:23.6px;top:232.6px;overflow:hidden" width="76.4" height="42.6" viewBox="0 0 76.4 42.6"><rect width="76.4" height="42.6" fill="#4B403E"/><rect x="0.6" y="0.6" width="75.2" height="41.4" fill="none" stroke="#5E5350" stroke-width="1.2"/><rect x="4.8" y="4.8" width="66.4" height="5" fill="#2E2523"/><text x="15.2" y="8.7" font-size="3.4" font-weight="bold" fill="#EFE4D0" textLength="45.6" lengthAdjust="spacing">TABLE OF CONTENTS</text><rect x="6.2" y="12.6" width="13.2" height="6.4" rx="1" fill="#332927"/><rect x="7.2" y="14.2" width="11" height="0.9" fill="#D8CCB8"/><path d="M6.8,17.8 Q12.8,19.4 18.8,17.8" stroke="#A39789" stroke-width="0.7" fill="none"/><rect x="57.4" y="12.6" width="13.2" height="6.4" rx="1" fill="#332927"/><rect x="58.4" y="14.2" width="11" height="0.9" fill="#D8CCB8"/><path d="M58.0,17.8 Q64.0,19.4 70.0,17.8" stroke="#A39789" stroke-width="0.7" fill="none"/><rect x="6.2" y="27.6" width="13.2" height="6.4" rx="1" fill="#332927"/><rect x="7.2" y="29.200000000000003" width="11" height="0.9" fill="#D8CCB8"/><path d="M6.8,32.800000000000004 Q12.8,34.4 18.8,32.800000000000004" stroke="#A39789" stroke-width="0.7" fill="none"/><rect x="57.4" y="27.6" width="13.2" height="6.4" rx="1" fill="#332927"/><rect x="58.4" y="29.200000000000003" width="11" height="0.9" fill="#D8CCB8"/><path d="M58.0,32.800000000000004 Q64.0,34.4 70.0,32.800000000000004" stroke="#A39789" stroke-width="0.7" fill="none"/><path d="M43.4,14 Q46,18 44,24 Q41,32 33,34.6 Q29.6,35 29.6,33 Q36,31 38.6,24 Q40.6,18 43.4,14 Z" fill="#2B2220"/><rect x="23.4" y="14.6" width="2.6" height="4.6" rx="0.6" fill="#E9E1D6"/><rect x="49.6" y="14.4" width="4.2" height="4.6" rx="0.5" fill="#E9E1D6"/><circle cx="24.6" cy="31.6" r="1.8" fill="#5C514D"/><circle cx="51.6" cy="31" r="1.8" fill="#5C514D"/></svg>
<svg class="r" style="left:23.6px;top:290.3px;overflow:hidden" width="76.4" height="42.6" viewBox="0 0 76.4 42.6"><rect width="76.4" height="42.6" fill="#3A2A2B"/><path d="M22,0 Q62,4 76.4,30 V0 Z" fill="#453435"/><path d="M12.8,0 L20,0 L22.6,22 L9.4,22 Z" fill="#9C8A3C" opacity="0.6"/><path d="M13.8,0 L19,0 L20.4,13 L12,13 Z" fill="#B9A64A" opacity="0.5"/><circle cx="5.2" cy="8.4" r="1.7" fill="#8D8186"/><path d="M14.6,17 Q16.4,14.6 18.2,17 L19.4,24 L24,23.4 L25.6,27 L20,29 L19.6,36 L17.6,36 L17,31 L15.6,36 L13.4,36 L13.6,29 L7,26.6 L5.6,23 L13.6,24.6 Z" fill="#E8D5A0"/><rect x="21.6" y="24.4" width="4.6" height="4.2" fill="#F1E4DC" transform="rotate(-14 23.9 26.5)"/><circle cx="33.6" cy="19.6" r="7.7" fill="#D9698C"/><circle cx="33.6" cy="19.6" r="5" fill="#3E2A30"/><path d="M30,24.6 Q30.6,20 32.6,19.4 Q31.6,16.6 33.8,16 Q36,16.6 35,19.4 Q37,20 37.4,24.6 Z" fill="#1F1518"/><text x="53.4" y="22.8" font-size="6.6" font-weight="bold" fill="#EFE4D0" textLength="7" lengthAdjust="spacingAndGlyphs">01</text><rect x="42" y="27.6" width="30.6" height="0.5" fill="#EFE4D0"/><rect x="42" y="32.4" width="30.6" height="0.5" fill="#EFE4D0"/><text x="42.4" y="32" font-size="4.6" font-weight="bold" fill="#EFE4D0" stroke="#EFE4D0" stroke-width="0.25" textLength="29.8" lengthAdjust="spacingAndGlyphs">INTRODUCTION</text></svg>
<svg class="r" style="left:23.6px;top:348px;overflow:hidden" width="76.4" height="42.6" viewBox="0 0 76.4 42.6"><rect width="76.4" height="42.6" fill="#4A3A35"/><rect y="30" width="76.4" height="12.6" fill="#433431"/><rect x="11.6" y="1.4" width="15.2" height="4.8" fill="#F3E7C2"/><rect x="13.6" y="3.4" width="10" height="0.7" fill="#D9C692"/><rect x="31" y="3.4" width="17.6" height="0.6" fill="#7C6C65"/><circle cx="5.6" cy="3.8" r="1.6" fill="#D9D0C6"/><circle cx="5.6" cy="3.8" r="0.8" fill="#3A2C28"/><rect x="11.6" y="9" width="15.2" height="4.8" fill="#F3E7C2"/><rect x="13.6" y="11" width="10" height="0.7" fill="#D9C692"/><rect x="31" y="11" width="17.6" height="0.6" fill="#7C6C65"/><circle cx="5.6" cy="11.4" r="1.6" fill="#D9D0C6"/><circle cx="5.6" cy="11.4" r="0.8" fill="#3A2C28"/><rect x="11.6" y="16.8" width="15.2" height="4.8" fill="#F3E7C2"/><rect x="13.6" y="18.8" width="10" height="0.7" fill="#D9C692"/><rect x="31" y="18.8" width="17.6" height="0.6" fill="#7C6C65"/><circle cx="5.6" cy="19.2" r="1.6" fill="#D9D0C6"/><circle cx="5.6" cy="19.2" r="0.8" fill="#3A2C28"/><rect x="11.6" y="24.6" width="15.2" height="4.8" fill="#F3E7C2"/><rect x="13.6" y="26.6" width="10" height="0.7" fill="#D9C692"/><rect x="31" y="26.6" width="17.6" height="0.6" fill="#7C6C65"/><circle cx="5.6" cy="27.0" r="1.6" fill="#D9D0C6"/><circle cx="5.6" cy="27.0" r="0.8" fill="#3A2C28"/><circle cx="62.4" cy="12.6" r="7.4" fill="#8C6A42"/><circle cx="62.4" cy="12.6" r="6.4" fill="#4A3528"/><path d="M59.4,18.6 Q59.6,13 61.4,12 Q60.4,8 62.8,7.4 Q65.2,8 64.2,12 Q66,13 66,18.4 Z" fill="#E6D19A"/><path d="M59,24.6 L62.4,27 L66,24.4 L69.4,29 L66.6,31 L67.6,38 L63,36 L58.6,38.4 L59.4,31 L56.6,29.4 Z" fill="#EBDDB6"/><path d="M57.6,33 L60,31 L60.6,38.6 L57,39 Z M66,31 L68.6,33 L69.4,38.6 L66,38.6 Z" fill="#B83A3A" opacity="0.8"/></svg>
<svg class="r" style="left:23.6px;top:405.9px;overflow:hidden" width="76.4" height="42.6" viewBox="0 0 76.4 42.6"><rect width="76.4" height="42.6" fill="#3F3231"/><path d="M11.6,42.6 V16 Q11.6,3 28,2.6 H58 Q71,3 71.4,18 V42.6 Z" fill="#4F423E"/><path d="M4.6,11 Q6.2,8 8,11 L8.4,15 Q11.4,17 11.4,22 L11,36.6 L9.6,39.6 L7.6,37.6 L5.6,39.6 L4.4,36 L4.6,24 L2,21 Q2.4,16 4.6,15 Z" fill="#EBD88F"/><path d="M5,10.8 Q6.2,8.6 7.6,10.8 L7.8,13.6 H5 Z" fill="#D6B85C"/><rect x="25" y="17" width="25" height="0.5" fill="#EFE4D0"/><rect x="25" y="23.6" width="25" height="0.5" fill="#EFE4D0"/><text x="25.4" y="23" font-size="6.4" font-weight="bold" fill="#EFE4D0" textLength="24.2" lengthAdjust="spacingAndGlyphs">THANKS</text><rect x="33" y="25.6" width="8.6" height="0.5" fill="#8D827C"/></svg>
<div class="r" style="left:0px;top:465px;width:904px;height:4.6px;background:#DCDCDC;background:linear-gradient(#DADADA,#E6E6E6);"></div>
<div class="r" style="left:0px;top:469px;width:904px;height:11px;background:#F0F0F0;"></div>
<span class="t" style="left:5.0px;top:469.6px;font-size:7.8px;letter-spacing:-0.13px;color:#4A4A4A;">Slide 1 of 6</span>
<svg class="r" style="left:55.5px;top:470px;" width="10" height="9" viewBox="0 0 10 9"><path d="M0.5,0.8 H4.2 L5,1.6 V8 L4.2,7.2 H0.5 Z M9.5,0.8 H5.8 L5,1.6" fill="none" stroke="#666" stroke-width="0.8"/><path d="M6.4,3.6 h2.4 M6.4,5.4 h2.4 M6.4,7.2 h1.4" stroke="#777" stroke-width="0.7"/></svg>
<span class="t" style="left:76.4px;top:469.6px;font-size:7.8px;letter-spacing:-0.08px;color:#4A4A4A;">English (Indonesia)</span>
<svg class="r" style="left:571px;top:469.6px;" width="8" height="10" viewBox="0 0 8 10"><path d="M0.4,5.8 H7.4 M0.4,7.6 H7.4 M0.4,9.2 H5" stroke="#666" stroke-width="0.8"/><path d="M2.6,4.4 V1.6 L4,0.4 L5.4,1.6 V4.4" fill="none" stroke="#666" stroke-width="0.8"/></svg>
<span class="t" style="left:581.6px;top:469.8px;font-size:7.8px;letter-spacing:-0.24px;color:#4A4A4A;">Notes</span>
<svg class="r" style="left:614.2px;top:469.6px;" width="10" height="10" viewBox="0 0 10 10"><path d="M0.6,0.6 H9.4 V6.4 H4.4 L2.4,8.8 V6.4 H0.6 Z" fill="#444"/></svg>
<span class="t" style="left:626.2px;top:469.8px;font-size:7.8px;letter-spacing:-0.34px;color:#4A4A4A;">Comments</span>
<div class="r" style="left:675.6px;top:468px;width:22.8px;height:12px;background:#CDCDCD;"></div>
<svg class="r" style="left:682px;top:470px;" width="10" height="9" viewBox="0 0 10 9"><rect x="0.5" y="0.5" width="9" height="8" fill="none" stroke="#666" stroke-width="0.8"/><path d="M3,0.5 V8.5 M0.5,3 H3 M0.5,5.6 H3" stroke="#666" stroke-width="0.7"/></svg>
<svg class="r" style="left:707.4px;top:470px;" width="10" height="9" viewBox="0 0 10 9"><rect x="0.5" y="0.5" width="3.6" height="3" fill="none" stroke="#777" stroke-width="0.7"/><rect x="5.6" y="0.5" width="3.6" height="3" fill="none" stroke="#777" stroke-width="0.7"/><rect x="0.5" y="5.2" width="3.6" height="3" fill="none" stroke="#777" stroke-width="0.7"/><rect x="5.6" y="5.2" width="3.6" height="3" fill="none" stroke="#777" stroke-width="0.7"/></svg>
<svg class="r" style="left:732.2px;top:470px;" width="10" height="9" viewBox="0 0 10 9"><path d="M0.5,1 Q2.8,0.2 5,1.4 Q7.2,0.2 9.5,1 V7.6 Q7.2,6.8 5,8 Q2.8,6.8 0.5,7.6 Z" fill="#9A9A9A"/><path d="M5,1.4 V8" stroke="#F1F1F1" stroke-width="0.7"/></svg>
<svg class="r" style="left:755.6px;top:470px;" width="9" height="9" viewBox="0 0 9 9"><path d="M0.5,0.6 H8.5 M1.4,0.6 V5.6 H7.6 V0.6 M4.5,5.6 V8.6" fill="none" stroke="#777" stroke-width="0.8"/></svg>
<svg class="r" style="left:760px;top:465.6px;" width="9" height="14" viewBox="0 0 9 14"><path d="M0.8,0.6 V10.6 L3.2,8.4 L5,12.6 L6.8,11.8 L5,7.8 H8.2 Z" fill="#111" stroke="#fff" stroke-width="0.5"/></svg>
<div class="r" style="left:779px;top:473.7px;width:3.2px;height:0.9px;background:#555;"></div>
<div class="r" style="left:785px;top:473.8px;width:67px;height:0.8px;background:#A8A8A8;"></div>
<div class="r" style="left:807.4px;top:470.8px;width:2.6px;height:7.8px;background:#6E6E6E;"></div>
<svg class="r" style="left:853px;top:471.6px;" width="5.4" height="5.4" viewBox="0 0 5.4 5.4"><path d="M0.2,2.7 H5.2 M2.7,0.2 V5.2" stroke="#555" stroke-width="1"/></svg>
<span class="t" style="left:866.4px;top:469.6px;font-size:7.5px;letter-spacing:-0.80px;color:#4A4A4A;">72%</span>
<svg class="r" style="left:893px;top:469.6px;" width="9" height="9" viewBox="0 0 9 9"><rect x="0.5" y="0.5" width="8" height="8" fill="none" stroke="#777" stroke-width="0.8"/><path d="M2.2,2.2 L6.8,6.8 M6.8,2.2 L2.2,6.8" stroke="#777" stroke-width="0.7"/><rect x="3.4" y="3.4" width="2.2" height="2.2" fill="#F1F1F1" stroke="#777" stroke-width="0.5"/></svg>
<div class="r" style="left:895.6px;top:102.7px;width:8.4px;height:362.6px;background:#E0E0E0;"></div>
<div class="r" style="left:895.6px;top:106.4px;width:8.4px;height:8px;background:#fff;"></div>
<svg class="r" style="left:897px;top:108.4px" width="6" height="4" viewBox="0 0 6 4"><path d="M0.6,3.4 L3,0.6 L5.4,3.4 Z" fill="#555"/></svg>
<div class="r" style="left:895.6px;top:116px;width:8.4px;height:40.2px;background:#fff;"></div>
<div class="r" style="left:895.6px;top:419.8px;width:8.4px;height:8.2px;background:#fff;"></div>
<svg class="r" style="left:896.8px;top:420.8px" width="6" height="6" viewBox="-3 -3 6 6"><path d="M-1.9800000000000002,-0.7200000000000001 L1.9800000000000002,-0.7200000000000001 L0,1.4400000000000002 Z" fill="#555"/></svg>
<svg class="r" style="left:897px;top:431.8px;" width="6" height="7" viewBox="0 0 6 7"><path d="M3,0.4 L5.4,3.2 H0.6 Z M3,3.4 L5.4,6.2 H0.6 Z" fill="#4A4A4A"/></svg>
<svg class="r" style="left:897px;top:443px;" width="6" height="7" viewBox="0 0 6 7"><path d="M0.6,0.6 H5.4 L3,3.4 Z M0.6,3.6 H5.4 L3,6.4 Z" fill="#4A4A4A"/></svg>
</body></html>
